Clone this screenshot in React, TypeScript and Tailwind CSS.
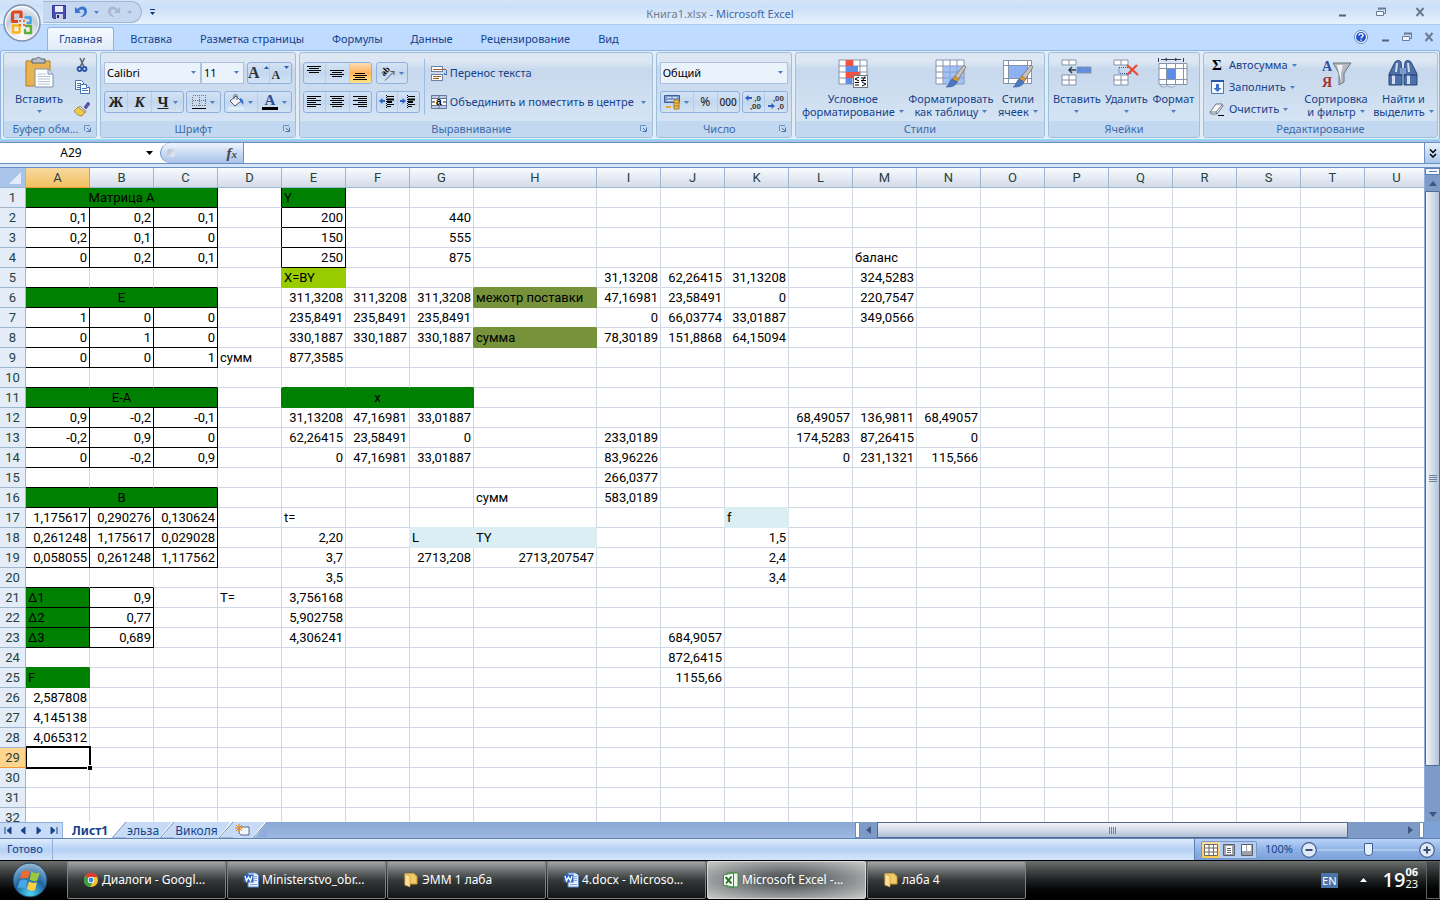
import { useState, type ReactNode } from 'react';

type Cell = { v?: string; align?: 'left' | 'center'; fill?: Fill; span?: number };
type Fill = 'green' | 'lime' | 'olive' | 'ice';

const COLS = 'ABCDEFGHIJKLMNOPQRSTU'.split('');
const ROWS = Array.from({ length: 32 }, (_, i) => i + 1);

const FILL_BG: Record<Fill, string> = {
  green: 'bg-[#008000]',
  lime: 'bg-[#99cc00]',
  olive: 'bg-[#76933c]',
  ice: 'bg-[#daeef3]',
};
const FILL_RIGHT: Record<Fill, string> = {
  green: 'border-r-[#008000]',
  lime: 'border-r-[#99cc00]',
  olive: 'border-r-[#76933c]',
  ice: 'border-r-[#daeef3]',
};
const FILL_BOTTOM: Record<Fill, string> = {
  green: 'border-b-[#008000]',
  lime: 'border-b-[#99cc00]',
  olive: 'border-b-[#76933c]',
  ice: 'border-b-[#daeef3]',
};

const cells: Record<string, Cell> = {
  A1: { v: 'Матрица А', align: 'center', fill: 'green', span: 3 },
  E1: { v: 'Y', align: 'left', fill: 'green' },
  E5: { v: 'X=BY', align: 'left', fill: 'lime' },
  A6: { v: 'E', align: 'center', fill: 'green', span: 3 },
  H6: { v: 'межотр поставки', align: 'left', fill: 'olive' },
  H8: { v: 'сумма', align: 'left', fill: 'olive' },
  D9: { v: 'сумм', align: 'left' },
  M4: { v: 'баланс', align: 'left' },
  A11: { v: 'E-A', align: 'center', fill: 'green', span: 3 },
  E11: { v: 'x', align: 'center', fill: 'green', span: 3 },
  A16: { v: 'B', align: 'center', fill: 'green', span: 3 },
  H16: { v: 'сумм', align: 'left' },
  E17: { v: 't=', align: 'left' },
  K17: { v: 'f', align: 'left', fill: 'ice' },
  G18: { v: 'L', align: 'left', fill: 'ice' },
  H18: { v: 'TY', align: 'left', fill: 'ice' },
  A21: { v: 'Δ1', align: 'left', fill: 'green' },
  A22: { v: 'Δ2', align: 'left', fill: 'green' },
  A23: { v: 'Δ3', align: 'left', fill: 'green' },
  D21: { v: 'T=', align: 'left' },
  A25: { v: 'F', align: 'left', fill: 'green' },
};

// numeric blocks, filled from the top left cell
const blocks: [string, number, string[][]][] = [
  ['A', 2, [['0,1', '0,2', '0,1'], ['0,2', '0,1', '0'], ['0', '0,2', '0,1']]],
  ['A', 7, [['1', '0', '0'], ['0', '1', '0'], ['0', '0', '1']]],
  ['A', 12, [['0,9', '-0,2', '-0,1'], ['-0,2', '0,9', '0'], ['0', '-0,2', '0,9']]],
  ['A', 17, [['1,175617', '0,290276', '0,130624'], ['0,261248', '1,175617', '0,029028'], ['0,058055', '0,261248', '1,117562']]],
  ['B', 21, [['0,9'], ['0,77'], ['0,689']]],
  ['A', 26, [['2,587808'], ['4,145138'], ['4,065312']]],
  ['E', 2, [['200'], ['150'], ['250']]],
  ['G', 2, [['440'], ['555'], ['875']]],
  ['E', 6, [['311,3208', '311,3208', '311,3208'], ['235,8491', '235,8491', '235,8491'], ['330,1887', '330,1887', '330,1887'], ['877,3585']]],
  ['I', 5, [['31,13208', '62,26415', '31,13208'], ['47,16981', '23,58491', '0'], ['0', '66,03774', '33,01887'], ['78,30189', '151,8868', '64,15094']]],
  ['M', 5, [['324,5283'], ['220,7547'], ['349,0566']]],
  ['E', 12, [['31,13208', '47,16981', '33,01887'], ['62,26415', '23,58491', '0'], ['0', '47,16981', '33,01887']]],
  ['I', 13, [['233,0189'], ['83,96226'], ['266,0377'], ['583,0189']]],
  ['L', 12, [['68,49057', '136,9811', '68,49057'], ['174,5283', '87,26415', '0'], ['0', '231,1321', '115,566']]],
  ['E', 18, [['2,20'], ['3,7'], ['3,5'], ['3,756168'], ['5,902758'], ['4,306241']]],
  ['G', 19, [['2713,208', '2713,207547']]],
  ['K', 18, [['1,5'], ['2,4'], ['3,4']]],
  ['J', 23, [['684,9057'], ['872,6415'], ['1155,66']]],
];
blocks.forEach(([col, row, values]) =>
  values.forEach((line, r) =>
    line.forEach((v, c) => {
      cells[COLS[COLS.indexOf(col) + c] + (row + r)] = { v };
    }),
  ),
);

// areas with all borders on: first col, first row, last col, last row
const frames = [
  [0, 1, 2, 4],
  [0, 6, 2, 9],
  [0, 11, 2, 14],
  [0, 16, 2, 19],
  [0, 21, 1, 23],
  [4, 1, 4, 4],
];
const framed = (c: number, r: number) => frames.some(([c1, r1, c2, r2]) => c >= c1 && c <= c2 && r >= r1 && r <= r2);

// fill of a cell, looking through merged ranges
const fillAt = (c: number, r: number): Fill | undefined => {
  const own = cells[COLS[c] + r];
  if (own?.fill) return own.fill;
  for (let i = 1; i <= 2; i++) {
    const left = cells[COLS[c - i] + r];
    if (left?.span && left.span > i) return left.fill;
  }
  return undefined;
};

function borders(c: number, r: number, span: number) {
  const last = c + span - 1;
  const own = fillAt(c, r);
  const nextFill = fillAt(last + 1, r);
  const belowFill = fillAt(c, r + 1);

  let right = 'border-r-[#d0d7e5]';
  if (framed(last, r) || framed(last + 1, r)) right = 'border-r-black';
  else if (own) right = 'border-r-transparent';
  else if (nextFill) right = FILL_RIGHT[nextFill];

  let bottom = 'border-b-[#d0d7e5]';
  if (framed(c, r) || framed(c, r + 1)) bottom = 'border-b-black';
  else if (own) bottom = 'border-b-transparent';
  else if (belowFill) bottom = FILL_BOTTOM[belowFill];

  return right + ' ' + bottom;
}

function Sheet({ selected, onSelect }: { selected: string; onSelect: (id: string) => void }) {
  return (
    <div className="min-w-0 flex-1 overflow-hidden bg-white">
      <table className="w-[1429px] table-fixed border-separate border-spacing-0 font-['Roboto','Noto_Sans',sans-serif] text-[13px] leading-[19px]">
        <colgroup>
          <col className="w-[26px]" />
          {COLS.map((c) => (
            <col key={c} className={c === 'H' ? 'w-[123px]' : 'w-16'} />
          ))}
        </colgroup>
        <thead>
          <tr className="h-5">
            <th className="border-r border-b border-[#9eb6ce] bg-[#a9c4e9] p-0">
              <svg viewBox="0 0 25 19" className="block h-[19px] w-full">
                <path d="M21 4v12H9z" fill="#e3ecf8" />
              </svg>
            </th>
            {COLS.map((c) => (
              <th
                key={c}
                scope="col"
                className={
                  'border-r border-b p-0 font-normal text-[#27413e] ' +
                  (selected[0] === c
                    ? 'border-[#f29536] bg-linear-to-b from-[#f9d99f] to-[#f1c15f]'
                    : 'border-[#9eb6ce] bg-linear-to-b from-[#f9fcfd] to-[#d3dbe9]')
                }
              >
                {c}
              </th>
            ))}
          </tr>
        </thead>
        <tbody>
          {ROWS.map((r) => (
            <tr key={r} className="h-5">
              <th
                scope="row"
                className={
                  'border-r border-b p-0 font-normal text-[#27413e] ' +
                  (selected.slice(1) === String(r) ? 'border-[#f29536] bg-[#ffd58d]' : 'border-[#9eb6ce] bg-[#e4ecf7]')
                }
              >
                {r}
              </th>
              {COLS.map((col, c) => {
                const id = col + r;
                const cell = cells[id];
                if (!cell && fillAt(c, r)) return null;
                const span = cell?.span ?? 1;
                return (
                  <td
                    key={id}
                    colSpan={span}
                    onClick={() => onSelect(id)}
                    className={
                      'relative border-r border-b px-[2px] py-0 whitespace-nowrap text-black ' +
                      borders(c, r, span) +
                      (cell?.fill ? ' ' + FILL_BG[cell.fill] : '') +
                      (cell?.align === 'left' ? ' text-left' : cell?.align === 'center' ? ' text-center' : ' text-right')
                    }
                  >
                    {cell?.v}
                    {selected === id && (
                      <span className="absolute -top-0.5 -right-0.5 -bottom-0.5 left-0 z-10 border-2 border-l border-black">
                        <span className="absolute -right-[3px] -bottom-[3px] size-[5px] border-t border-l border-white bg-black" />
                      </span>
                    )}
                  </td>
                );
              })}
            </tr>
          ))}
        </tbody>
      </table>
    </div>
  );
}

/* ---------- small shared pieces ---------- */

function Arrow({ className = '' }: { className?: string }) {
  return (
    <svg viewBox="0 0 5 3" className={'h-[3px] w-[5px] shrink-0 ' + className}>
      <path d="M0 0h5L2.500 3z" fill="#4f7fbf" />
    </svg>
  );
}

function Group({ title, launcher, width, children }: { title: string; launcher?: boolean; width: string; children: ReactNode }) {
  return (
    <section className={'flex h-[86px] flex-col rounded-[3px] border border-[#9fbfdb] bg-linear-to-b from-[#dce7f3] from-10% via-[#c7d8ed] via-20% to-[#d9e8f6] ' + width}>
      <div className="flex min-h-0 flex-1 justify-between px-[3px]">{children}</div>
      <div className="flex h-4 items-center rounded-b-[2px] bg-[#c1d8f0] px-[3px] text-[#3e6aaa]">
        <span className="flex-1 truncate text-center">{title}</span>
        {launcher && (
          <button aria-label={title}>
            <svg viewBox="0 0 8 8" className="mr-px size-2">
              <path d="M0.500 6V0.500H6" fill="none" stroke="#6b8fc0" />
              <path d="M3 3l3 3M6.500 2.500v4h-4" fill="none" stroke="#5176a8" />
            </svg>
          </button>
        )}
      </div>
    </section>
  );
}

function Box({ children }: { children: ReactNode }) {
  return (
    <div className="flex h-[22px] divide-x divide-[#b5cdeb] overflow-hidden rounded-[3px] border border-[#8fb0dc] bg-linear-to-b from-[#d5e3f4] via-[#c3d7ee] to-[#d3e3f5]">
      {children}
    </div>
  );
}

function Tool({ label, width, active, children }: { label: string; width: string; active?: boolean; children: ReactNode }) {
  return (
    <button
      aria-label={label}
      className={'flex items-center justify-center gap-1 ' + width + (active ? ' bg-linear-to-b from-[#fbdbb5] via-[#feb456] to-[#ffe685]' : '')}
    >
      {children}
    </button>
  );
}

function BigButton({ lines, width, arrowBelow, children }: { lines: string[]; width: string; arrowBelow?: boolean; children: ReactNode }) {
  return (
    <button className={'flex shrink-0 flex-col items-center pt-1 leading-[13px] whitespace-nowrap ' + width}>
      <svg viewBox="0 0 32 32" className="mb-[3px] size-8">
        {children}
      </svg>
      <span>{lines[0]}</span>
      {arrowBelow ? (
        <Arrow className="mt-[5px]" />
      ) : (
        <span className="flex items-center gap-1">
          {lines[1]}
          <Arrow />
        </span>
      )}
    </button>
  );
}

function Dropdown({ label, options, width }: { label: string; options: string[]; width: string }) {
  return (
    <div className={'relative h-[22px] border border-[#abc1de] bg-[#eaf2fb] ' + width}>
      <select aria-label={label} className="block h-5 w-full appearance-none bg-transparent px-[2px] text-black">
        {options.map((o) => (
          <option key={o}>{o}</option>
        ))}
      </select>
      <Arrow className="pointer-events-none absolute top-2 right-1" />
    </div>
  );
}

// text lines icon: list of [x1, x2] per line
function Lines({ rows, y }: { rows: [number, number][]; y: number }) {
  return (
    <svg viewBox="0 0 16 16" className="size-4" shapeRendering="crispEdges">
      {rows.map(([a, b], i) => (
        <path key={i} d={`M${a} ${y + i * 2 + 0.5}H${b}`} stroke="#000" />
      ))}
    </svg>
  );
}

function WindowButtons({ gap }: { gap: string }) {
  return (
    <div className={'flex items-center ' + gap}>
      <button aria-label="Свернуть">
        <svg viewBox="0 0 10 10" className="size-2.5"><path d="M2 8.500h7" stroke="#566478" strokeWidth="2" /></svg>
      </button>
      <button aria-label="Восстановить">
        <svg viewBox="0 0 10 10" className="size-2.5" fill="none" stroke="#6b7c92">
          <path d="M2.500 3V1.500h7v5H8" /><path d="M2 1.500h8" strokeWidth="2" />
          <path d="M0.500 4.500h7v4h-7z" fill="#f1f6fd" />
        </svg>
      </button>
      <button aria-label="Закрыть">
        <svg viewBox="0 0 10 10" className="size-2.5"><path d="M1.500 1l7 8M8.500 1l-7 8" stroke="#6b7c92" strokeWidth="2" /></svg>
      </button>
    </div>
  );
}

/* ---------- title and tabs ---------- */

function TitleBar() {
  return (
    <div className="flex h-6 items-center bg-linear-to-b from-[#d3e3f8] from-10% via-[#cbdff8] via-25% to-[#e6f1fd] px-[15px]">
      <div className="flex flex-1 items-center">
        <div className="ml-7 flex h-[22px] w-[99px] items-center gap-2 rounded-r-full border border-l-0 border-[#9db8d9] bg-[#c5d8ef] pl-[9px]">
          <button aria-label="Сохранить">
            <svg viewBox="0 0 14 14" className="size-3.5">
              <path d="M0.500 0.500h13v13h-12l-1-1z" fill="#4a4fb5" stroke="#33378d" />
              <path d="M3 1h8v6H3z" fill="#e8ecfa" /><path d="M4 9h7v5H4z" fill="#c9cfe6" /><path d="M5 10h2v3H5z" fill="#26296b" />
            </svg>
          </button>
          <button aria-label="Отменить" className="flex items-center gap-1.5">
            <svg viewBox="0 0 14 14" className="size-3.5">
              <path d="M1 2v6h6L5 6c3-3 6-1 5 2-0.500 1.500-2 3-4 4 4 0 7-2 7-6 0-5-6-6-9.500-2z" fill="#3f74cd" />
            </svg>
            <Arrow />
          </button>
          <button aria-label="Повторить" className="flex items-center gap-1.5 opacity-40">
            <svg viewBox="0 0 14 14" className="size-3.5">
              <path d="M13 2v6H7l2-2C6 3 3 5 4 8c0.500 1.500 2 3 4 4-4 0-7-2-7-6 0-5 6-6 9.500-2z" fill="#7d8ea8" />
            </svg>
            <Arrow />
          </button>
        </div>
        <button aria-label="Настройка панели быстрого доступа" className="ml-2">
          <svg viewBox="0 0 5 6" className="h-1.5 w-[5px]"><path d="M0 0h5v1H0zM0 3h5L2.500 6z" fill="#15317e" /></svg>
        </button>
      </div>
      <h1 className="pt-1 text-[#3e6aaa]">
        <span className="text-[#6d7c90]">Книга1.xlsx</span> - Microsoft Excel
      </h1>
      <div className="flex flex-1 justify-end">
        <WindowButtons gap="gap-[29px]" />
      </div>
    </div>
  );
}

function OfficeOrb() {
  return (
    <button aria-label="Кнопка Office" className="absolute top-1 left-[3px] z-20">
      <svg viewBox="0 0 38 38" className="size-[38px]">
        <defs>
          <radialGradient id="orb" cx="50%" cy="80%" r="80%">
            <stop offset="0" stopColor="#ffffff" />
            <stop offset="0.5" stopColor="#d6dde8" />
            <stop offset="0.600" stopColor="#c0cad8" />
            <stop offset="1" stopColor="#f4f7fb" />
          </radialGradient>
        </defs>
        <circle cx="19" cy="19" r="18" fill="url(#orb)" stroke="#7f92ad" strokeWidth="1.500" />
        <circle cx="19" cy="19" r="16.500" fill="none" stroke="#fff" />
        <g fill="none" strokeLinejoin="round" strokeWidth="2.400">
          <path d="M15 17.500H9.500V10q0-2 2-2H18v6" stroke="#e0471a" strokeWidth="3.200" />
          <path d="M21.500 13.500h6v5.500h-4" stroke="#3e9fe0" />
          <path d="M10 28.500v-7h6.500v7z" stroke="#fcb316" />
          <path d="M22 22h6v7h-6v-4" stroke="#5fae35" />
        </g>
        <path d="M16 16h2v2h-2zM20 16h2v2h-2zM16 20h2v2h-2zM20 20h2v2h-2z" fill="#e8742c" />
      </svg>
    </button>
  );
}

const TABS = ['Главная', 'Вставка', 'Разметка страницы', 'Формулы', 'Данные', 'Рецензирование', 'Вид'];

function TabBar() {
  const [active, setActive] = useState('Главная');
  return (
    <div className="flex h-[26px] items-end border-t border-[#a9ccf2] bg-[#bfdbff] pr-1.5 pl-[47px]">
      <nav className="flex flex-1 gap-1">
        {TABS.map((t) => (
          <button
            key={t}
            onClick={() => setActive(t)}
            className={
              'h-[23px] rounded-t-[3px] border border-b-0 px-[11px] ' +
              (t === active ? 'border-[#8db2e3] bg-linear-to-b from-[#f5faff] to-[#e0ebf8]' : 'border-transparent')
            }
          >
            {t}
          </button>
        ))}
      </nav>
      <div className="flex items-center gap-3 pb-1.5">
        <button aria-label="Справка">
          <svg viewBox="0 0 14 14" className="size-3.5">
            <circle cx="7" cy="7" r="6.500" fill="#fff" stroke="#5c86c7" />
            <circle cx="7" cy="7" r="5" fill="#2454c8" />
            <path d="M5 5.500c0-2.500 4-2.500 4 0 0 1.500-2 1.500-2 2.800M7 9.500v1.300" fill="none" stroke="#fff" strokeWidth="1.400" />
          </svg>
        </button>
        <WindowButtons gap="gap-3" />
      </div>
    </div>
  );
}

/* ---------- ribbon ---------- */

function GridCells({ x, y, w, h, nx, ny, fill = '#fff' }: { x: number; y: number; w: number; h: number; nx: number; ny: number; fill?: string }) {
  let d = '';
  for (let i = 0; i <= nx; i++) d += `M${x + i * w} ${y}v${h * ny}`;
  for (let j = 0; j <= ny; j++) d += `M${x} ${y + j * h}h${w * nx}`;
  return (
    <>
      <rect x={x} y={y} width={w * nx} height={h * ny} fill={fill} />
      <path d={d} fill="none" stroke="#8593ab" />
    </>
  );
}

function Brush() {
  return (
    <>
      <path d="M29 8l2 2-8 13-4-3z" fill="#c9c4bb" stroke="#77706a" strokeWidth="0.800" />
      <path d="M20 19l4 3-2 3-5-3z" fill="#d99a3d" stroke="#8f6422" strokeWidth="0.600" />
      <path d="M17 22l5 3c-2 5-7 5-11 5 3-1 3-6 6-8z" fill="#4b78c2" stroke="#2f579a" strokeWidth="0.600" />
    </>
  );
}

function ClipboardGroup() {
  return (
    <Group title="Буфер обм..." launcher width="w-[94px]">
      <BigButton lines={['Вставить']} arrowBelow width="w-[64px]">
        <path d="M3 4h24v25H3z" fill="#e9b352" stroke="#b27d24" />
        <path d="M9 2h4c0-2 5-2 5 0h4v4H9z" fill="#b9bfc8" stroke="#596270" />
        <path d="M12 12h13l5 5v13H12z" fill="#fff" stroke="#7f90ad" />
        <path d="M25 12v5h5" fill="#d6e0f0" stroke="#7f90ad" />
        <path d="M15 17h8M15 19.500h12M15 22h12M15 24.500h12M15 27h12" stroke="#b4c3da" />
      </BigButton>
      <div className="flex w-8 flex-col items-center gap-1.5 pt-1">
        <button aria-label="Вырезать">
          <svg viewBox="0 0 16 16" className="size-4">
            <path d="M6 1l4 9M10.500 1L6 10" stroke="#5c6678" strokeWidth="1.600" />
            <circle cx="5.500" cy="12" r="2" fill="none" stroke="#2e56a8" strokeWidth="1.800" />
            <circle cx="10.500" cy="12" r="2" fill="none" stroke="#2e56a8" strokeWidth="1.800" />
          </svg>
        </button>
        <button aria-label="Копировать">
          <svg viewBox="0 0 16 16" className="size-4" fill="#fff" stroke="#4472b8">
            <path d="M1.500 1.500h6l2 2v7h-8z" /><path d="M3 4.500h4M3 6.500h4M3 8.500h3" />
            <path d="M6.500 5.500h6l3 3v6h-9z" /><path d="M8 9.500h5M8 11.500h6M12.500 5.500v3h3" />
          </svg>
        </button>
        <button aria-label="Формат по образцу">
          <svg viewBox="0 0 16 16" className="size-4">
            <path d="M14 1l2 2-4 5-2-2z" fill="#5d54b5" stroke="#3b3580" strokeWidth="0.600" />
            <path d="M6 5l6 5-1 2-7-5z" fill="#ddd" stroke="#777" strokeWidth="0.700" />
            <path d="M4 6l7 5-3 4c-3 0-6-2-8-5z" fill="#ecc84d" stroke="#94731c" strokeWidth="0.700" />
          </svg>
        </button>
      </div>
    </Group>
  );
}

function FontGroup() {
  return (
    <Group title="Шрифт" launcher width="w-[197px]">
      <div className="flex flex-1 flex-col gap-[7px] pt-[9px]">
        <div className="flex justify-between">
          <div className="flex">
            <Dropdown label="Шрифт" options={['Calibri', 'Arial', 'Cambria']} width="w-[97px]" />
            <Dropdown label="Размер шрифта" options={['11', '12', '14']} width="w-[43px]" />
          </div>
          <Box>
            <Tool label="Увеличить размер шрифта" width="w-[22px] gap-0">
              <span className="font-['Liberation_Serif',serif] text-[16px] font-bold text-[#333]">A</span>
              <svg viewBox="0 0 5 14" className="h-3.5 w-[5px]"><path d="M0 3h5L2.500 0z" fill="#2f5fae" /></svg>
            </Tool>
            <Tool label="Уменьшить размер шрифта" width="w-[21px] gap-0">
              <span className="pt-1 font-['Liberation_Serif',serif] text-[12px] font-bold text-[#333]">A</span>
              <svg viewBox="0 0 5 14" className="h-3.5 w-[5px]"><path d="M0 0h5L2.500 3z" fill="#2f5fae" /></svg>
            </Tool>
          </Box>
        </div>
        <div className="flex justify-between font-['Liberation_Serif',serif] text-[15px] font-bold text-[#222]">
          <Box>
            <Tool label="Полужирный" width="w-[23px]">Ж</Tool>
            <Tool label="Курсив" width="w-6"><i>К</i></Tool>
            <Tool label="Подчеркнутый" width="w-[31px]"><u>Ч</u><Arrow /></Tool>
          </Box>
          <Box>
            <Tool label="Границы" width="w-[33px] gap-1">
              <svg viewBox="0 0 14 14" className="size-3.5" shapeRendering="crispEdges">
                <path d="M0.500 0.500h13v10H.5zM0.500 5.500h13M7.500 0v11" fill="none" stroke="#777" strokeDasharray="1 1" />
                <path d="M0 13.500h14" stroke="#000" />
              </svg>
              <Arrow />
            </Tool>
          </Box>
          <Box>
            <Tool label="Цвет заливки" width="w-[33px] gap-1">
              <svg viewBox="0 0 16 16" className="size-4">
                <path d="M2 7l6-5 5 5-6 5z" fill="#f4f6fa" stroke="#4d5a70" /><path d="M6 5V2c0-2 3-2 3 0v4" fill="none" stroke="#4d5a70" />
                <path d="M12 4c3 1 4 4 3 7-1-2-2-3-3-3z" fill="#3470c8" /><path d="M0 13h16v3H0z" fill="#daeef3" />
              </svg>
              <Arrow />
            </Tool>
            <Tool label="Цвет текста" width="w-[33px] gap-1">
              <span className="flex w-4 flex-col items-center border-b-3 border-black leading-[13px] text-[#2b4f91]">A</span>
              <Arrow />
            </Tool>
          </Box>
        </div>
      </div>
    </Group>
  );
}

function AlignGroup() {
  const full: [number, number] = [1, 15];
  const short: [number, number] = [3, 13];
  return (
    <Group title="Выравнивание" launcher width="w-[356px]">
      <div className="flex flex-col gap-[7px] pt-[9px]">
        <div className="flex gap-1">
          <Box>
            <Tool label="По верхнему краю" width="w-[22px]"><Lines y={1} rows={[full, short, full, short]} /></Tool>
            <Tool label="По середине" width="w-6"><Lines y={5} rows={[full, short, full, short]} /></Tool>
            <Tool label="По нижнему краю" width="w-[21px]" active><Lines y={8} rows={[short, full, short, full]} /></Tool>
          </Box>
          <Box>
            <Tool label="Ориентация" width="w-[30px] gap-0.5">
              <svg viewBox="0 0 16 16" className="size-4">
                <text x="3" y="9" fontSize="9" fontWeight="bold" fontFamily="Liberation Serif" transform="rotate(-45 7 8)">ab</text>
                <path d="M6 15.500L15 6.500M11.500 6.500H15V10" fill="none" stroke="#555" />
              </svg>
              <Arrow />
            </Tool>
          </Box>
        </div>
        <div className="flex gap-1">
          <Box>
            <Tool label="По левому краю" width="w-[22px]"><Lines y={2} rows={[[1, 15], [1, 10], [1, 15], [1, 10], [1, 15], [1, 10]]} /></Tool>
            <Tool label="По центру" width="w-6"><Lines y={2} rows={[full, short, full, short, full, short]} /></Tool>
            <Tool label="По правому краю" width="w-[21px]"><Lines y={2} rows={[[1, 15], [6, 15], [1, 15], [6, 15], [1, 15], [6, 15]]} /></Tool>
          </Box>
          <Box>
            {['Уменьшить отступ', 'Увеличить отступ'].map((l, i) => (
              <Tool key={l} label={l} width="w-[21px]">
                <svg viewBox="0 0 16 16" className="size-4">
                  <path d="M7.500 1v14" stroke="#000" strokeDasharray="1 1" />
                  <path d="M8 2.500h7M8 10.500h7M8 12.500h4" stroke="#000" /><path d="M8 5.500h7M8 8h5" stroke="#000" strokeWidth="2" />
                  <path d={i === 0 ? 'M0 7l3.500-3v2H6v2H3.500v2z' : 'M6 7L2.500 4v2H0v2h2.500v2z'} fill="#2f62c4" />
                </svg>
              </Tool>
            ))}
          </Box>
        </div>
      </div>
      <div className="my-[6px] ml-1 w-px bg-[#9dbce2]" />
      <div className="flex flex-1 flex-col gap-[7px] pt-[9px] pl-1.5 whitespace-nowrap">
        <button className="flex h-[22px] items-center gap-[3px]">
          <svg viewBox="0 0 16 16" className="size-4" shapeRendering="crispEdges">
            <path d="M0.500 1.500h11v5H.5zM0.500 9.500h11v6H.5z" fill="#fff" stroke="#6f81a0" />
            <path d="M2 4.500h13M2 11.500h8M2 13.500h6" stroke="#9c5d1d" /><path d="M15.500 5v4H13" fill="none" stroke="#4a70ae" /><path d="M14 7v4l-2-2z" fill="#4a70ae" />
          </svg>
          Перенос текста
        </button>
        <button className="flex h-[22px] items-center gap-[3px]">
          <svg viewBox="0 0 16 16" className="size-4">
            <path d="M0.500 1.500h15v13H.5z" fill="#bccbe2" stroke="#63779b" /><path d="M8 1v3M8 12v3M0 4.500h16M0 11.500h16" stroke="#63779b" />
            <path d="M1 5h14v6H1z" fill="#fff" /><path d="M1 8h3M12 8h3" stroke="#222" />
            <text x="5" y="11" fontSize="10" fontWeight="bold" fontFamily="Liberation Sans">a</text>
          </svg>
          Объединить и поместить в центре
          <Arrow className="ml-1" />
        </button>
      </div>
    </Group>
  );
}

function NumberGroup() {
  return (
    <Group title="Число" launcher width="w-[137px]">
      <div className="flex flex-1 flex-col gap-[7px] pt-[9px]">
        <Dropdown label="Числовой формат" options={['Общий', 'Числовой', 'Денежный']} width="w-full" />
        <div className="flex justify-between text-[12px] text-[#222]">
          <Box>
            <Tool label="Финансовый формат" width="w-[33px]">
              <svg viewBox="0 0 16 16" className="size-4">
                <path d="M0.500 1.500h15v7H.5z" fill="#7e9bd0" stroke="#3c5f9f" /><path d="M3 3.500h4M9 3.500h4M3 6.500h10" stroke="#dfe8f8" />
                <path d="M10 6h5v9h-5z" fill="#efc252" stroke="#a9781b" /><path d="M10 9h5M10 12h5" stroke="#a9781b" /><path d="M2 12h5v2H2z" fill="#e0a93a" />
              </svg>
              <Arrow />
            </Tool>
            <Tool label="Процентный формат" width="w-6">%</Tool>
            <Tool label="Формат с разделителями" width="w-[21px]"><span className="text-[10px] font-medium">000</span></Tool>
          </Box>
          <Box>
            {[['Увеличить разрядность', ',0', ',00'], ['Уменьшить разрядность', ',00', ',0']].map(([l, a, b], i) => (
              <Tool key={l} label={l} width="w-[22px]">
                <svg viewBox="0 0 18 16" className="h-4 w-[18px]" fontSize="8" fontFamily="Liberation Sans" fontWeight="bold" fill="#333">
                  <text x="17" y="7" textAnchor="end">{a}</text>
                  <text x="17" y="15" textAnchor="end">{b}</text>
                  <path d={i === 0 ? 'M1 4l3.500-3v2H8v2H4.500v2z' : 'M8 12L4.500 9v2H1v2h3.500v2z'} fill="#2f62c4" />
                </svg>
              </Tool>
            ))}
          </Box>
        </div>
      </div>
    </Group>
  );
}

function StylesGroup() {
  return (
    <Group title="Стили" width="w-[250px]">
      <BigButton lines={['Условное', 'форматирование']} width="w-[108px]">
        <GridCells x={2} y={3} w={7} h={6} nx={4} ny={4} />
        <path d="M9 3h7v6H9zM9 15h14v6H9z" fill="#f25340" /><path d="M9 9h12v6H9zM9 21h6v6H9z" fill="#5d8de6" />
        <rect x="16.500" y="18.500" width="14" height="12" fill="#fff" stroke="#6b7686" />
        <path d="M22 20l-4 2 4 2M18 25.500h4M18 28h4M24 21h5M24 23.500h5M28 19.500l-3 5M25 25l4 2-4 2" fill="none" stroke="#000" />
      </BigButton>
      <BigButton lines={['Форматировать', 'как таблицу']} width="w-[88px]">
        <GridCells x={1} y={3} w={7} h={6} nx={4} ny={4} />
        <path d="M8 9h21v18H8z" fill="#7ea6ee" fillOpacity="0.700" />
        <Brush />
      </BigButton>
      <BigButton lines={['Стили', 'ячеек']} width="w-[46px]">
        <path d="M1.500 3.500h28v23h-28z" fill="#fff" stroke="#8593ab" />
        <path d="M6.500 3v24M25.500 3v24M1 8.500h28M1 21.500h28" stroke="#8593ab" />
        <path d="M7 9h18v12H7z" fill="#8db1f2" />
        <Brush />
      </BigButton>
    </Group>
  );
}

function CellsGroup() {
  return (
    <Group title="Ячейки" width="w-[153px]">
      <BigButton lines={['Вставить']} arrowBelow width="w-[50px]">
        <GridCells x={1} y={3} w={7} h={5} nx={2} ny={1} />
        <GridCells x={16} y={10} w={7} h={6} nx={2} ny={1} fill="#5d8de6" />
        <GridCells x={1} y={18} w={7} h={5} nx={2} ny={2} />
        <path d="M15 13H8M11 10l-3 3 3 3" fill="none" stroke="#333f55" strokeWidth="1.500" />
      </BigButton>
      <BigButton lines={['Удалить']} arrowBelow width="w-[48px]">
        <GridCells x={4} y={3} w={7} h={5} nx={2} ny={1} />
        <path d="M9 10.500h12v6H9z" fill="none" stroke="#2e56a8" strokeDasharray="1 1" />
        <GridCells x={4} y={18} w={7} h={5} nx={2} ny={2} />
        <path d="M17 8l11 10M27 8L17 18" stroke="#ee4b31" strokeWidth="2.200" />
      </BigButton>
      <BigButton lines={['Формат']} arrowBelow width="w-[45px]">
        <path d="M2 6.500h28v21H2z" fill="#fff" stroke="#8593ab" />
        <path d="M9.500 6v21M18.500 6v21M26.500 6v21M2 11.500h28M2 22.500h28" stroke="#8593ab" />
        <path d="M1.500 1v4M26.500 1v4M4 2.500h20M10 1L8 2.500 10 4M18 1l2 1.500L18 4" fill="none" stroke="#333f55" />
        <path d="M10 12h8v10h-8z" fill="#5d8de6" />
        <path d="M3 28.500c3 2 5 2 7 0 3 2 6 2 8 0" fill="#fff" stroke="#8593ab" />
      </BigButton>
    </Group>
  );
}

function EditGroup() {
  return (
    <Group title="Редактирование" width="min-w-[235px] flex-1">
      <div className="flex flex-col pt-px pl-[2px] whitespace-nowrap">
        <button className="flex h-[22px] items-center gap-1">
          <span className="w-4 text-center font-['Liberation_Serif',serif] text-[15px] font-bold text-black">Σ</span>
          Автосумма <Arrow />
        </button>
        <button className="flex h-[22px] items-center gap-1">
          <svg viewBox="0 0 16 16" className="size-4">
            <path d="M2.500 1.500h12v13h-12z" fill="#f2f7ff" stroke="#4d74b5" /><path d="M2 2h13" stroke="#2b56a8" strokeWidth="2" />
            <path d="M7 5h3v4h2.500l-4 4-4-4H7z" fill="#3a6fd0" />
          </svg>
          Заполнить <Arrow />
        </button>
        <button className="flex h-[22px] items-center gap-1">
          <svg viewBox="0 0 16 16" className="size-4">
            <path d="M1 11l6-8h6l1 2-6 8H2z" fill="#f6f6f8" stroke="#6e7687" /><path d="M1 11h6l6-7M7 11l1 2" fill="none" stroke="#6e7687" />
            <path d="M9 14.500h6" stroke="#000" />
          </svg>
          Очистить <Arrow />
        </button>
      </div>
      <div className="flex gap-1">
        <BigButton lines={['Сортировка', 'и фильтр']} width="w-[66px]">
          <path d="M13 6h18l-7 10v9l-5 3V16z" fill="#b5b9bf" stroke="#6d737c" /><path d="M17 8h6l-2 8v8z" fill="#eef0f3" />
          <text x="2" y="14" fontSize="14" fontWeight="bold" fontFamily="Liberation Serif" fill="#2b4fa0">A</text>
          <text x="2" y="30" fontSize="14" fontWeight="bold" fontFamily="Liberation Serif" fill="#a2322a">Я</text>
        </BigButton>
        <BigButton lines={['Найти и', 'выделить']} width="w-[61px]">
          <path d="M8 5c2-2 5-2 6 0l1 11v12H2V17z" fill="#4c70a8" stroke="#2a4678" />
          <path d="M24 5c-2-2-5-2-6 0l-1 11v12h13V17z" fill="#4c70a8" stroke="#2a4678" />
          <path d="M13 11h6v6h-6z" fill="#7c9bc9" /><path d="M5 18h3v9H5zM20 18h3v9h-3zM9 6h2l-1 9H8zM20 6h2l1 9h-2z" fill="#cfdcf2" />
          <path d="M2 18h13M17 18h13" stroke="#21396a" />
        </BigButton>
      </div>
    </Group>
  );
}

/* ---------- formula bar ---------- */

function FormulaBar({ selected }: { selected: string }) {
  return (
    <div className="flex h-[26px] border-t border-b border-[#6a8fc0] bg-[#d5e5fa] pb-[3px] text-[12px]">
      <div className="flex w-[160px] items-center border-b border-[#6a8fc0] bg-white">
        <input aria-label="Имя" readOnly value={selected} className="w-full min-w-0 pr-1 text-center text-black outline-none" />
        <svg viewBox="0 0 7 4" className="mr-[7px] h-1 w-[7px] shrink-0"><path d="M0 0h7L3.500 4z" fill="#000" /></svg>
      </div>
      <div className="flex w-[84px] items-center justify-between border-r border-b border-[#6a8fc0] bg-white">
        <div className="flex h-full flex-1 items-center justify-between rounded-l-full border-l border-[#6a8fc0] bg-linear-to-b from-[#eef4fd] to-[#a7c2ea] pr-1.5 pl-1.5">
          <span className="size-2 rounded-full bg-linear-to-br from-[#a9b4c6] to-[#f5f8fc]" />
          <button aria-label="Вставить функцию" className="font-['Liberation_Serif',serif] text-[15px] font-bold text-[#444] italic">
            f<span className="text-[11px]">x</span>
          </button>
        </div>
      </div>
      <input aria-label="Строка формул" className="min-w-0 flex-1 border-b border-[#6a8fc0] bg-white px-1 outline-none" />
      <button aria-label="Развернуть строку формул" className="flex w-4 items-center justify-center border-b border-l border-[#6a8fc0] bg-linear-to-b from-[#e8f1fc] to-[#a9c5ec]">
        <svg viewBox="0 0 8 9" className="h-[9px] w-2"><path d="M1 0.500l3 3 3-3M1 5l3 3 3-3" fill="none" stroke="#000" strokeWidth="1.500" /></svg>
      </button>
    </div>
  );
}

function VerticalScroll() {
  return (
    <div className="flex w-4 flex-col border-l border-[#8fb0dc] bg-[#7d9bc6]">
      <div className="flex h-[7px] items-center justify-center border border-[#5c7fb5] bg-[#f4f8fe]"><span className="h-px w-2 bg-[#5c7fb5]" /></div>
      <button aria-label="Вверх" className="flex h-4 items-center justify-center">
        <svg viewBox="0 0 8 5" className="h-[5px] w-2"><path d="M0 5h8L4 0z" fill="#3f5480" /></svg>
      </button>
      <div className="flex flex-1 flex-col items-center justify-center gap-px rounded-[1px] border border-[#52688f] bg-linear-to-r from-[#f3f5f8] via-[#d5dde9] to-[#b4c3d8]">
        {[0, 1, 2, 3].map((i) => (
          <span key={i} className="h-px w-2 bg-[#71829e]" />
        ))}
      </div>
      <div className="h-10" />
      <button aria-label="Вниз" className="flex h-4 items-center justify-center">
        <svg viewBox="0 0 8 5" className="h-[5px] w-2"><path d="M0 0h8L4 5z" fill="#3f5480" /></svg>
      </button>
    </div>
  );
}

/* ---------- sheet tabs and status ---------- */

function Slant({ from, to }: { from: string; to: string }) {
  return (
    <svg viewBox="0 0 14 15" className="h-[15px] w-3.5 shrink-0" preserveAspectRatio="none">
      <path d="M0 0h14L0 15z" fill={from} />
      <path d="M14 0v15H0z" fill={to} />
      <path d="M13 0L1 15" stroke="#fff" strokeWidth="2" />
      <path d="M14 0L1 15" stroke="#6a87b8" />
    </svg>
  );
}

const NAV = ['M2 1v7M8 1L4 4.500 8 8z', 'M6 1L2 4.500 6 8z', 'M3 1l4 3.500L3 8z', 'M1 1l4 3.500L1 8zM7 1v7'];
const NAV_LABELS = ['Первый лист', 'Предыдущий лист', 'Следующий лист', 'Последний лист'];

function SheetTabs() {
  const [sheet, setSheet] = useState('Лист1');
  const color = (n: string) => (n === sheet ? '#ffffff' : '#c7dbf6');
  return (
    <div className="flex h-[17px] border-b border-[#5f83b8] bg-linear-to-b from-[#88a8d6] to-[#9fb8de] text-[12px] leading-[15px]">
      <div className="flex w-[63px] items-center justify-around border-t border-r border-[#8fb0dc] bg-[#c7dbf6]">
        {NAV.map((d, i) => (
          <button key={d} aria-label={NAV_LABELS[i]}>
            <svg viewBox="0 0 9 9" className="size-[9px]"><path d={d} fill="#15428b" stroke="#15428b" /></svg>
          </button>
        ))}
      </div>
      {['Лист1', 'эльза', 'Виколя'].map((n, i, all) => (
        <div key={n} className="flex">
          <button
            onClick={() => setSheet(n)}
            className={(i === 0 ? 'pr-1 pl-[9px] ' : 'px-px ') + (n === sheet ? 'bg-white font-bold' : 'bg-[#c7dbf6]')}
          >
            {n}
          </button>
          <Slant from={color(n)} to={color(all[i + 1] ?? '')} />
        </div>
      ))}
      <button aria-label="Вставить лист" className="bg-[#c7dbf6] px-[2px]">
        <svg viewBox="0 0 16 13" className="h-[13px] w-4">
          <path d="M4 3h10v8H6l-2-2z" fill="#f3f6fb" stroke="#56688a" /><path d="M4 0v8M0 4h8M1 1l6 6M7 1L1 7" stroke="#e08a1e" />
        </svg>
      </button>
      <Slant from="#c7dbf6" to="#90aed9" />
      <div className="flex-1" />
      <div className="flex w-[569px]">
        <div className="w-[5px] border border-[#6a8fc0] bg-white" />
        <button aria-label="Влево" className="flex w-[17px] items-center justify-center bg-[#7d9bc6]">
          <svg viewBox="0 0 5 8" className="h-2 w-[5px]"><path d="M5 0v8L0 4z" fill="#3f5480" /></svg>
        </button>
        <div className="flex w-[471px] items-center justify-center gap-px border border-[#52688f] bg-linear-to-b from-[#f1f3f7] via-[#d5dde9] to-[#adbdd4]">
          {[0, 1, 2, 3].map((i) => (
            <span key={i} className="h-[7px] w-px bg-[#71829e]" />
          ))}
        </div>
        <div className="flex-1 bg-[#7d9bc6]" />
        <button aria-label="Вправо" className="flex w-[18px] items-center justify-center bg-[#7d9bc6]">
          <svg viewBox="0 0 5 8" className="h-2 w-[5px]"><path d="M0 0v8l5-4z" fill="#3f5480" /></svg>
        </button>
        <div className="w-[5px] border border-[#6a8fc0] bg-white" />
      </div>
      <div className="w-4 bg-[#7ea1d6]" />
    </div>
  );
}

function StatusBar() {
  const [zoom, setZoom] = useState(50);
  return (
    <div className="flex h-[21px] items-stretch bg-linear-to-b from-[#dfecfd] via-[#b6d1f5] to-[#d5e5fa]">
      <div className="flex w-[53px] items-center border-r border-[#8fb0dc] pl-[7px]">Готово</div>
      <div className="flex-1" />
      <div className="flex w-[246px] items-center border-l border-[#5c7fb5] bg-linear-to-b from-[#b9d3f7] via-[#8fb3e6] to-[#7ba0d8] pr-[5px] pl-[6px]">
        <div className="flex h-[18px] overflow-hidden rounded-[2px] border border-[#7798c9] bg-[#b4cdf0]">
          <button aria-label="Обычный" className="w-[18px] bg-linear-to-b from-[#fbd9a0] to-[#fecb4d] pl-[2px]">
            <svg viewBox="0 0 14 12" className="h-3 w-3.5"><path d="M0.500 0.500h13v11H.5zM0.500 4h13M0.500 8h13M5 0v12M9.500 0v12" fill="#fff" stroke="#6d6a60" /></svg>
          </button>
          <button aria-label="Разметка страницы" className="flex w-[18px] items-center justify-center">
            <svg viewBox="0 0 12 12" className="size-3"><path d="M0.500 0.500h11v11H.5z" fill="#9da3ad" stroke="#5b6069" /><path d="M3 2h6v8H3z" fill="#fff" /><path d="M4 4.500h4M4 6.500h4M4 8.500h4" stroke="#666" /></svg>
          </button>
          <button aria-label="Страничный" className="flex w-[18px] items-center justify-center">
            <svg viewBox="0 0 12 12" className="size-3"><path d="M0.500 0.500h11v11H.5z" fill="#9da3ad" stroke="#5b6069" /><path d="M1 1h4v6H1zM6 1h4v6H6z" fill="#fff" /></svg>
          </button>
        </div>
        <span className="w-[44px] text-center">{zoom * 2}%</span>
        <ZoomButton label="Уменьшить" onClick={() => setZoom(Math.max(5, zoom - 5))} d="M4.500 8h7" />
        <input
          type="range"
          aria-label="Масштаб"
          min={0}
          max={100}
          value={zoom}
          onChange={(e) => setZoom(Number(e.target.value))}
          className="h-4 min-w-0 flex-1 appearance-none bg-transparent bg-linear-to-b from-transparent from-45% via-[#e4eefb] via-50% to-transparent to-55% [&::-webkit-slider-thumb]:h-[13px] [&::-webkit-slider-thumb]:w-[9px] [&::-webkit-slider-thumb]:appearance-none [&::-webkit-slider-thumb]:rounded-b-[4px] [&::-webkit-slider-thumb]:border [&::-webkit-slider-thumb]:border-[#3f5f96] [&::-webkit-slider-thumb]:bg-[#e8f0fb]"
        />
        <ZoomButton label="Увеличить" onClick={() => setZoom(Math.min(100, zoom + 5))} d="M4.500 8h7M8 4.500v7" />
      </div>
    </div>
  );
}

function ZoomButton({ label, d, onClick }: { label: string; d: string; onClick: () => void }) {
  return (
    <button aria-label={label} onClick={onClick}>
      <svg viewBox="0 0 16 16" className="size-4">
        <circle cx="8" cy="8" r="7.300" fill="#dfe9f7" stroke="#44618f" strokeWidth="1.200" />
        <path d={d} stroke="#3c4f70" strokeWidth="2" />
      </svg>
    </button>
  );
}

/* ---------- taskbar ---------- */

const icons: Record<string, ReactNode> = {
  chrome: (
    <>
      <circle cx="8" cy="8" r="7" fill="#f4c430" />
      <path d="M8 8L2 4.300A7 7 0 0 1 14.500 5H8z" fill="#de3b2f" />
      <path d="M8 8L2 4.300A7 7 0 0 0 7 15l3-5z" fill="#38a14b" />
      <circle cx="8" cy="8" r="3.200" fill="#fff" /><circle cx="8" cy="8" r="2.400" fill="#3f7fe0" />
    </>
  ),
  word: (
    <>
      <path d="M5 1h8l2.500 2.500V15H5z" fill="#e8f0fc" stroke="#5a86cc" /><path d="M7 12.500h7M11 4.500h3M11 6.500h3M11 8.500h3" stroke="#7fa3dc" />
      <path d="M0.500 2.500h10v8H.5z" fill="#2d5fb8" /><path d="M2 4l1.500 5L5.500 5l2 4L9 4" fill="none" stroke="#fff" strokeWidth="1.300" />
    </>
  ),
  folder: (
    <>
      <path d="M2 1.500h9l3 3V12H7l-5 1z" fill="#f0c968" stroke="#c69a36" /><path d="M2 1.500l5 3V15l-5-2z" fill="#f9e29a" stroke="#c69a36" strokeWidth="0.700" />
    </>
  ),
  excel: (
    <>
      <path d="M4 1h11v14H4z" fill="#eaf6e6" stroke="#3a8b3e" /><path d="M0.500 3l10-2v14l-10-2z" fill="#fff" stroke="#3a8b3e" />
      <path d="M2.500 5l6 6.500M8.500 4.500L3 11.500" stroke="#24792a" strokeWidth="2" />
    </>
  ),
};

const TASKS = [
  ['chrome', 'Диалоги - Googl...'],
  ['word', 'Ministerstvo_obr...'],
  ['folder', 'ЭММ 1 лаба'],
  ['word', '4.docx - Microso...'],
  ['excel', 'Microsoft Excel -...'],
  ['folder', 'лаба 4'],
];

function Taskbar() {
  return (
    <div className="flex h-10 items-stretch border-t border-black bg-linear-to-b from-[#6c7170] via-[#1c2020] via-50% to-black pb-px text-white">
      <button aria-label="Пуск" className="flex w-[67px] items-center pl-3">
        <svg viewBox="0 0 36 36" className="size-9">
          <defs>
            <radialGradient id="start" cx="50%" cy="90%" r="90%">
              <stop offset="0" stopColor="#4fd4f2" />
              <stop offset="0.500" stopColor="#1d64a0" />
              <stop offset="1" stopColor="#9dbdd6" />
            </radialGradient>
          </defs>
          <circle cx="18" cy="18" r="17" fill="url(#start)" stroke="#1c3c58" />
          <path d="M10 10q4-3 8-1l-2 8q-4-2-8 0z" fill="#ee6a2b" /><path d="M19.500 9.500q4 3 8 1l-2 8q-4 2-8-1z" fill="#9cc83f" />
          <path d="M7.500 19q4-3 8-0.500l-2 8q-4-2-8 0z" fill="#4ba6e8" /><path d="M17 19.500q4 2.500 8 0.500l-2 8q-4 2-8-1z" fill="#fbcf3f" />
        </svg>
      </button>
      <div className="flex min-w-0 flex-1 gap-px">
        {TASKS.map(([icon, label]) => {
          const active = icon === 'excel';
          return (
            <button
              key={label}
              className={
                'flex w-[159px] min-w-0 items-center gap-[3px] rounded-[2px] border pl-[15px] text-[12px] whitespace-nowrap ' +
                (active
                  ? 'border-[#d8dada] bg-radial from-[#4d5151] from-10% to-[#c9cbcb]'
                  : 'border-[#7d8181] bg-linear-to-b from-[#a3a5a5] via-[#363a3b] via-50% to-[#141617]')
              }
            >
              <svg viewBox="0 0 16 16" className="size-4 shrink-0">{icons[icon]}</svg>
              {label}
            </button>
          );
        })}
      </div>
      <div className="flex items-center">
        <button className="bg-[#4a74a8] px-px text-[11px] leading-[15px]">EN</button>
        <button aria-label="Скрытые значки" className="mr-4 ml-[22px]">
          <svg viewBox="0 0 7 4" className="h-1 w-[7px]"><path d="M0 4h7L3.500 0z" fill="#fff" /></svg>
        </button>
        <time className="flex items-center">
          <span className="text-[20px] font-medium">19</span>
          <span className="flex flex-col pb-1 text-right text-[11px] leading-[12px]">
            <b className="h-3">06</b>
            <span className="h-3">23</span>
          </span>
        </time>
      </div>
      <button aria-label="Показать рабочий стол" className="ml-2 w-3.5 border border-[#5d6262] bg-linear-to-b from-[#4a4e4e] to-black" />
    </div>
  );
}

export default function App() {
  const [selected, setSelected] = useState('A29');

  return (
    <main className="relative flex h-screen flex-col overflow-hidden bg-[#bfdbff] font-['Noto_Sans',sans-serif] text-[11px] text-[#15428b]">
      <OfficeOrb />
      <TitleBar />
      <TabBar />
      <div className="border-b-2 border-[#a5c3ea] bg-[#bfdbff]">
        <div className="flex gap-[3px] rounded-[3px] border border-[#8db2e3] border-b-[#8fe0f0] bg-[#e3edf8] p-px pl-[2px]">
          <ClipboardGroup />
          <FontGroup />
          <AlignGroup />
          <NumberGroup />
          <StylesGroup />
          <CellsGroup />
          <EditGroup />
        </div>
      </div>
      <FormulaBar selected={selected} />
      <div className="flex min-h-0 flex-1">
        <Sheet selected={selected} onSelect={setSelected} />
        <VerticalScroll />
      </div>
      <SheetTabs />
      <StatusBar />
      <Taskbar />
    </main>
  );
}
